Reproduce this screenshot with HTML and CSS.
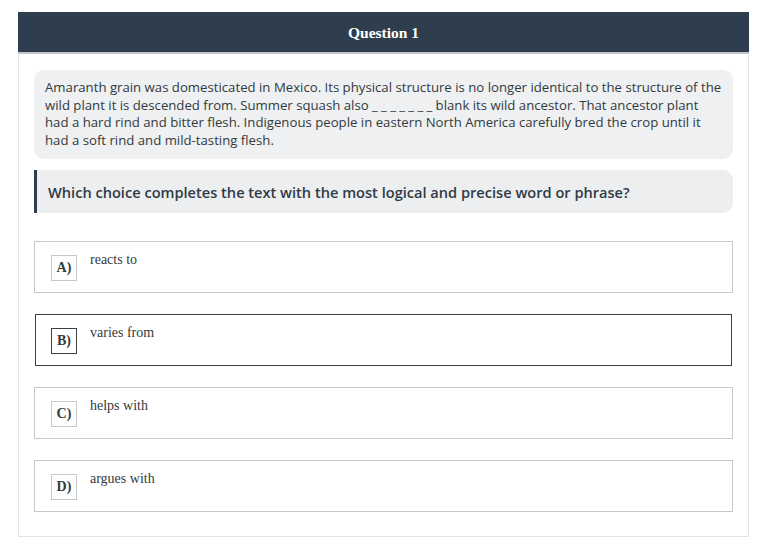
FILE: index.html
```html
<!DOCTYPE html>
<html>
<head>
<meta charset="utf-8">
<link rel="stylesheet" href="styles.css">
</head>
<body>
<div class="card">
  <div class="header">Question 1</div>
  <div class="content">
    <div class="passage">Amaranth grain was domesticated in Mexico. Its physical structure is no longer identical to the structure of the wild plant it is descended from. Summer squash also <span class="blank">_______</span>blank its wild ancestor. That ancestor plant had a hard rind and bitter flesh. Indigenous people in eastern North America carefully bred the crop until it had a soft rind and mild-tasting flesh.</div>
    <div class="prompt">Which choice completes the text with the most logical and precise word or phrase?</div>
    <div class="options">
      <div class="option"><span class="letter">A)</span><span class="text">reacts to</span></div>
      <div class="option selected"><span class="letter">B)</span><span class="text">varies from</span></div>
      <div class="option"><span class="letter">C)</span><span class="text">helps with</span></div>
      <div class="option"><span class="letter">D)</span><span class="text">argues with</span></div>
    </div>
  </div>
</div>
</body>
</html>
```
FILE: styles.css
```css
html, body { margin: 0; padding: 0; background: #fff; }
body { padding: 12px 16px 0 18px; }
.card {
  border: 1px solid #e4e4e4;
  border-top: none;
  width: 729px;
}
.header {
  background: #2e3e4f;
  color: #fff;
  font-family: "Liberation Serif", serif;
  font-weight: bold;
  font-size: 15.5px;
  text-align: center;
  height: 40px;
  line-height: 42px;
  border-bottom: 2px solid #c2c7cc;
  margin: 0 -1px;
}
.content { padding: 16px 15px 24px 15px; }
.passage {
  background: #eef0f1;
  border-radius: 10px;
  padding: 9px 11px 10px 11px;
  font-family: "Open Sans", sans-serif;
  font-size: 13.2px;
  line-height: 17.5px;
  color: #333a40;
}
.blank { letter-spacing: 3.3px; }
.prompt {
  margin-top: 11px;
  background: #eceeef;
  border-left: 3px solid #2e3e4f;
  border-radius: 0 10px 10px 0;
  padding: 0 11px;
  height: 43px;
  line-height: 45px;
  font-family: "Open Sans", sans-serif;
  font-weight: 600;
  font-size: 14.6px;
  color: #2f3b46;
}
.options {
  margin-top: 28px;
  display: flex;
  flex-direction: column;
  gap: 21px;
}
.option {
  border: 1px solid #c8c8c8;
  display: flex;
  align-items: flex-start;
  padding: 12px 0 0 16px;
  box-sizing: border-box;
  height: 52px;
  font-family: "Liberation Serif", serif;
  color: #333a40;
}
.option.selected {
  border-color: #3a4048;
  margin: 0 1px;
  padding-left: 15px;
}
.letter {
  width: 26px;
  height: 26px;
  box-sizing: border-box;
  border: 1px solid #c8c8c8;
  display: flex;
  align-items: center;
  justify-content: center;
  font-weight: bold;
  font-size: 14px;
  margin-top: 1px;
}
.selected .letter { border-color: #3a4048; }
.text {
  margin-left: 13px;
  font-size: 14px;
  line-height: 16px;
  margin-top: -2px;
}
```
